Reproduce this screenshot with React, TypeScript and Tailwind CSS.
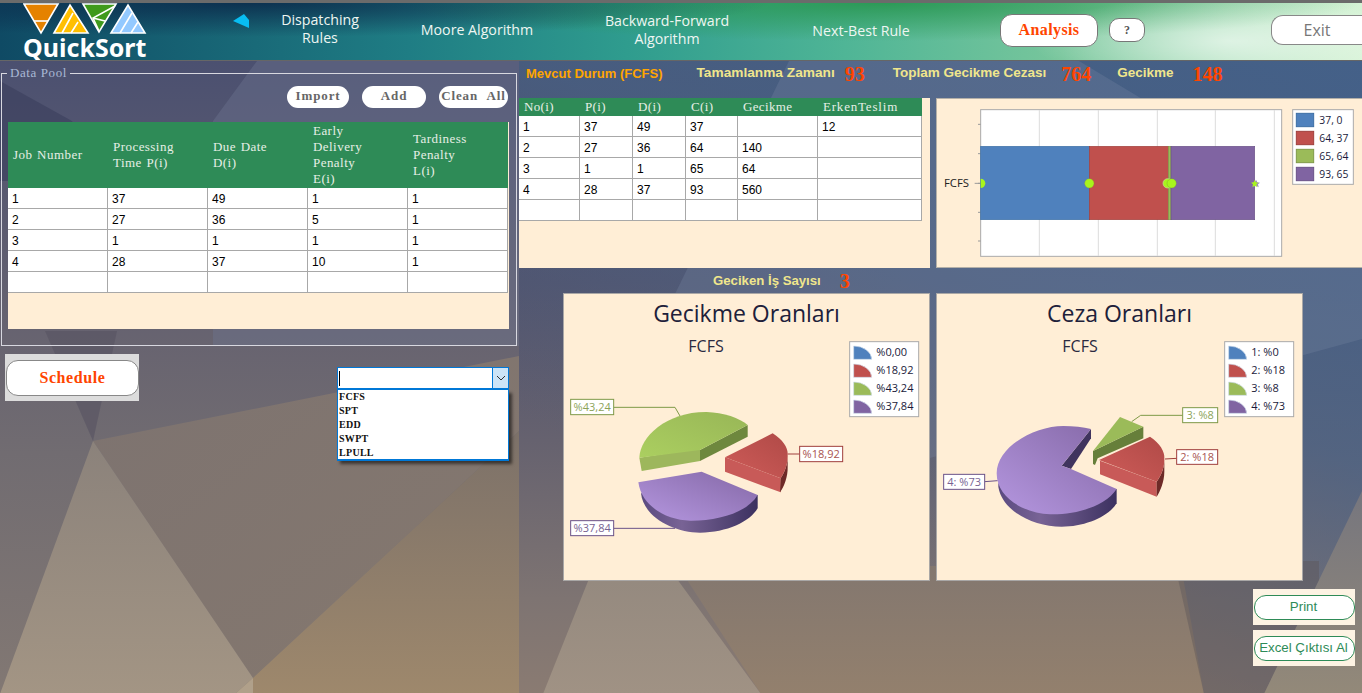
import React from "react";

const sans = "font-['Liberation_Sans',Arial,sans-serif]";

function LeftBackground() {
  return (
    <svg className="absolute inset-0 -z-10" width="519" height="633" viewBox="0 0 519 633">
      <defs>
        <linearGradient id="lbase" x1="0" y1="0" x2="0" y2="1">
          <stop offset="0" stopColor="#4b5070" />
          <stop offset="0.45" stopColor="#686470" />
          <stop offset="0.62" stopColor="#716c71" />
          <stop offset="1" stopColor="#827873" />
        </linearGradient>
        <linearGradient id="llight" x1="0" y1="0" x2="0" y2="1">
          <stop offset="0" stopColor="#8b827b" />
          <stop offset="1" stopColor="#a39584" />
        </linearGradient>
        <linearGradient id="lmid" x1="0" y1="0" x2="1" y2="1">
          <stop offset="0" stopColor="#7d7370" />
          <stop offset="1" stopColor="#85786e" />
        </linearGradient>
        <linearGradient id="lwarm" x1="0" y1="0" x2="0" y2="1">
          <stop offset="0" stopColor="#7c7169" />
          <stop offset="1" stopColor="#9e886c" />
        </linearGradient>
      </defs>
      <rect width="519" height="633" fill="url(#lbase)" />
      <polygon points="0,20 72,60 110,120 0,120" fill="#3d4160" opacity="0.7" />
      <polygon points="213,60 257,0 519,0 519,285 213,285" fill="#6d7692" opacity="0.4" />
      <polygon points="45,270 117,270 93,380" fill="#5a5664" opacity="0.7" />
      <polygon points="93,380 519,295 519,370 253,617" fill="url(#lmid)" />
      <polygon points="253,617 519,370 519,633 235,633" fill="url(#lwarm)" />
      <polygon points="93,380 0,633 235,633 253,617" fill="url(#llight)" />
      <polygon points="235,633 253,617 253,633" fill="#b0a08a" />
    </svg>
  );
}

function RightBackground() {
  return (
    <svg className="absolute inset-0 -z-10" width="843" height="633" viewBox="0 0 843 633">
      <defs>
        <linearGradient id="rbase" x1="0" y1="0" x2="0" y2="1">
          <stop offset="0" stopColor="#434a68" />
          <stop offset="0.35" stopColor="#4f526c" />
          <stop offset="0.6" stopColor="#66626f" />
          <stop offset="0.85" stopColor="#7e7472" />
          <stop offset="1" stopColor="#8a7b72" />
        </linearGradient>
        <linearGradient id="rblue" x1="1" y1="0" x2="0.35" y2="1">
          <stop offset="0" stopColor="#44638c" stopOpacity="0.9" />
          <stop offset="0.45" stopColor="#4a6488" stopOpacity="0.7" />
          <stop offset="0.85" stopColor="#5a6480" stopOpacity="0" />
        </linearGradient>
        <linearGradient id="rlight" x1="0" y1="0" x2="0" y2="1">
          <stop offset="0" stopColor="#8d847c" />
          <stop offset="1" stopColor="#a09284" />
        </linearGradient>
        <linearGradient id="rwarm" x1="0" y1="0" x2="0" y2="1">
          <stop offset="0" stopColor="#83776f" />
          <stop offset="1" stopColor="#93806d" />
        </linearGradient>
        <linearGradient id="rgray" x1="0" y1="0" x2="0" y2="1">
          <stop offset="0" stopColor="#76767e" />
          <stop offset="1" stopColor="#938979" />
        </linearGradient>
      </defs>
      <rect width="843" height="633" fill="url(#rbase)" />
      <rect width="843" height="633" fill="url(#rblue)" />
      <polygon points="155,235 270,0 560,0 843,170 843,278 400,400" fill="#7a88a6" opacity="0.28" />
      <polygon points="159,505 242,633 685,633 662,505" fill="url(#rwarm)" />
      <polygon points="101,440 24,633 242,633" fill="url(#rlight)" />
      <polygon points="655,500 685,633 745,633 800,520 800,500" fill="#5e5658" opacity="0.45" />
      <polygon points="745,633 843,430 843,633" fill="url(#rgray)" />
    </svg>
  );
}

function Logo() {
  const s = { stroke: "#fff", strokeWidth: 1.6 };
  return (
    <svg width="126" height="32" viewBox="0 0 126 32" className="block">
      <polygon points="1,1 35,1 18,30" fill="#e58200" {...s} />
      <line x1="11" y1="18" x2="25" y2="18" {...s} />
      <polygon points="31,30 47,2 65,30" fill="#ffbf00" {...s} />
      <path d="M39 30 L50 10 M48 30 L55 19" {...s} fill="none" />
      <polygon points="60,1 93,1 76,29" fill="#3f9a1c" {...s} />
      <path d="M92 3 L70 15 L76 28 M70 15 L82 18" {...s} fill="none" />
      <polygon points="88,30 105,2 122,30" fill="#93c9ff" {...s} />
      <path d="M97 30 L109 10 M108 30 L115 19" {...s} fill="none" />
    </svg>
  );
}

function NavItem({ w, children }: { w: string; children: React.ReactNode }) {
  return <div className={`${w} text-center text-[14.2px] leading-[18px] text-[#eef6f2] font-['Open_Sans',sans-serif]`}>{children}</div>;
}

function Header() {
  return (
    <header className="flex items-center h-[61px] shrink-0 border-t-[3px] border-b border-t-[#6b6b6b] border-b-[#666] bg-[radial-gradient(ellipse_200px_45px_at_1230px_38px,rgba(255,255,255,0.55),rgba(255,255,255,0)),radial-gradient(ellipse_520px_34px_at_250px_0px,rgba(10,35,70,0.8),rgba(10,35,70,0)),radial-gradient(ellipse_480px_38px_at_880px_0px,rgba(40,150,80,0.9),rgba(40,150,80,0)),linear-gradient(to_right,#0f4a64_0%,#1f7d84_30%,#2f9c8e_46%,#4fb596_62%,#78c69c_78%,#b4e3c2_90%,#d6f3d6_100%)]">
      <div className="w-[233px] pl-[23px] h-full overflow-hidden">
        <Logo />
        <div className="text-white font-bold text-[25px] leading-[27px] font-['Noto_Sans',sans-serif] -mt-[1px]">QuickSort</div>
      </div>
      <svg width="17" height="15" viewBox="0 0 17 15" className="-mt-[20px]">
        <polygon points="0,7 11,0 16,6 16,14" fill="#08bdf2" />
      </svg>
      <NavItem w="w-[140px] pb-[5px]">
        Dispatching
        <br />
        Rules
      </NavItem>
      <NavItem w="w-[174px] pb-[3px]">Moore Algorithm</NavItem>
      <NavItem w="w-[206px] pb-[3px]">
        Backward-Forward
        <br />
        Algorithm
      </NavItem>
      <NavItem w="w-[182px] pb-[1px]">Next-Best Rule</NavItem>
      <button className="ml-[48px] w-[98px] h-[33px] -mt-[3px] bg-white rounded-[12px] border border-[#777] text-[#ff4500] font-bold text-[16px] tracking-[0.4px] font-['Liberation_Serif',serif]">Analysis</button>
      <button className="ml-[11px] w-[36px] h-[24px] -mt-[3px] bg-white rounded-[10px] border border-[#777] text-[#555] font-bold text-[12px] font-['Liberation_Serif',serif]">?</button>
      <button className="ml-[126px] w-[91px] h-[30px] -mt-[3px] bg-white rounded-l-[12px] border border-r-0 border-[#888] text-[#777] text-[16px] font-['Open_Sans',sans-serif]">Exit</button>
    </header>
  );
}

const jobRows = [
  ["1", "37", "49", "1", "1"],
  ["2", "27", "36", "5", "1"],
  ["3", "1", "1", "1", "1"],
  ["4", "28", "37", "10", "1"],
  ["", "", "", "", ""],
];

function SmallButton({ w, children }: { w: string; children: React.ReactNode }) {
  return (
    <button className={`${w} h-[22px] pb-[4px] bg-white rounded-[11px] text-[#666] font-bold text-[13px] tracking-[0.9px] [word-spacing:5px] leading-none whitespace-nowrap font-['Liberation_Serif',serif]`}>{children}</button>
  );
}

function LeftColumn() {
  return (
    <section className="relative w-[519px] shrink-0 h-full">
      <LeftBackground />
      <fieldset className="mt-[4px] ml-[1px] w-[516px] h-[281px] border border-[#d8d8e0] pl-[6px] pr-[7px]">
        <legend className="-ml-[1px] px-[3px] text-[13px] leading-[16px] tracking-[0.6px] text-[#a9b8d4] font-['Liberation_Serif',serif]">Data Pool</legend>
        <div className="flex justify-end gap-[13px] pt-[5px] pr-[1px]">
          <SmallButton w="w-[62px]">Import</SmallButton>
          <SmallButton w="w-[64px]">Add</SmallButton>
          <SmallButton w="w-[69px]">Clean All</SmallButton>
        </div>
        <div className="mt-[14px] h-[207px] bg-[#ffeed6]">
          <table className="table-fixed w-[500px] border-separate border-spacing-0">
            <thead>
              <tr className="h-[66px] bg-[#2e8b57] text-left text-[#e6efe6] text-[13px] leading-[16px] tracking-[0.45px] [word-spacing:1px] font-['Liberation_Serif',serif]">
                <th className="font-normal pl-[5px] w-[100px]">Job Number</th>
                <th className="font-normal pl-[5px] w-[100px]">Processing<br />Time P(i)</th>
                <th className="font-normal pl-[5px] w-[100px]">Due Date<br />D(i)</th>
                <th className="font-normal pl-[5px] w-[100px]">Early<br />Delivery<br />Penalty<br />E(i)</th>
                <th className="font-normal pl-[5px] w-[100px]">Tardiness<br />Penalty<br />L(i)</th>
              </tr>
            </thead>
            <tbody>
              {jobRows.map((r, i) => (
                <tr key={i} className="h-[21px] bg-white">
                  {r.map((c, j) => (
                    <td key={j} className={`border-r border-b border-[#a8a8a8] pl-[4px] pt-[2px] pb-0 text-[12px] leading-[14px] text-black ${sans}`}>{c}</td>
                  ))}
                </tr>
              ))}
            </tbody>
          </table>
        </div>
      </fieldset>
      <div className="flex items-start mt-[8px] ml-[5px]">
        <div className="w-[134px] h-[47px] bg-[#dcdcdc] pt-[6px] pl-[1px]">
          <button className="w-[133px] h-[36px] bg-white rounded-[12px] border border-[#888] text-[#ff4500] font-bold text-[16px] tracking-[0.6px] font-['Liberation_Serif',serif]">Schedule</button>
        </div>
        <div className="relative ml-[198px] mt-[13px] w-[172px]">
          <div className="flex h-[23px] bg-white border border-b-2 border-[#0078d7]">
            <div className="flex-1 flex items-center pl-[1px]">
              <span className="w-[1px] h-[15px] bg-black" />
            </div>
            <div className="w-[16px] flex items-center justify-center bg-[#cce4f7] border-l border-[#0078d7]">
              <svg width="10" height="6" viewBox="0 0 10 6">
                <path d="M1 1 L5 5 L9 1" fill="none" stroke="#333" strokeWidth="1" />
              </svg>
            </div>
          </div>
          <ul className="absolute left-0 top-[23px] w-[172px] h-[71px] bg-white border border-t-0 border-[#0078d7] border-b-2 pl-[1px] shadow-[3px_3px_3px_rgba(0,0,0,0.55)] text-[10px] leading-[14px] font-bold tracking-[0.3px] text-[#111] font-['Liberation_Serif',serif]">
            <li>FCFS</li>
            <li>SPT</li>
            <li>EDD</li>
            <li>SWPT</li>
            <li>LPULL</li>
          </ul>
        </div>
      </div>
    </section>
  );
}

const resultRows = [
  ["1", "37", "49", "37", "", "12"],
  ["2", "27", "36", "64", "140", ""],
  ["3", "1", "1", "65", "64", ""],
  ["4", "28", "37", "93", "560", ""],
  ["", "", "", "", "", ""],
];

function ResultTable() {
  const heads = [
    ["No(i)", "w-[61px]"],
    ["P(i)", "w-[53px]"],
    ["D(i)", "w-[53px]"],
    ["C(i)", "w-[52px]"],
    ["Gecikme", "w-[80px]"],
    ["ErkenTeslim", "w-[104px] tracking-[0.8px]"],
  ];
  return (
    <div className="w-[411px] h-[170px] bg-[#ffeed6]">
      <table className="table-fixed w-[403px] border-separate border-spacing-0">
        <thead>
          <tr className="h-[18px] bg-[#2e8b57] text-left text-[#e6efe6] text-[13px] leading-[16px] tracking-[0.35px] font-['Liberation_Serif',serif]">
            {heads.map(([h, w]) => (
              <th key={h} className={`${w} font-normal pl-[5px]`}>{h}</th>
            ))}
          </tr>
        </thead>
        <tbody>
          {resultRows.map((r, i) => (
            <tr key={i} className="h-[21px] bg-white">
              {r.map((c, j) => (
                <td key={j} className={`border-r border-b border-[#a8a8a8] pl-[4px] pt-[2px] pb-0 text-[12px] leading-[14px] text-black ${sans}`}>{c}</td>
              ))}
            </tr>
          ))}
        </tbody>
      </table>
    </div>
  );
}

const chartFont = "'Open Sans', sans-serif";

function GanttChart() {
  const grid = [328, 505, 682, 856, 1033];
  const ticks = [88, 176, 265, 352, 438];
  const legend = [
    ["#4f81bd", "#3d6fa5", "37, 0"],
    ["#c0504d", "#a03f3c", "64, 37"],
    ["#9bbb59", "#7f9a48", "65, 64"],
    ["#8064a2", "#6a5288", "93, 65"],
  ];
  return (
    <div className="w-[426px] h-[170px] bg-[#ffeed6] border border-r-0 border-[#b4b0a8]">
      <svg width="425" height="168" viewBox="21 12 1275 504" className="block">
        <rect x="152" y="44" width="903" height="440" fill="#fff" stroke="#aaa" strokeWidth="3" />
        {grid.map((x) => (
          <line key={x} x1={x} y1="45" x2={x} y2="483" stroke="#dcdcdc" strokeWidth="3" />
        ))}
        {ticks.map((y) => (
          <line key={y} x1="144" y1={y} x2="152" y2={y} stroke="#999" strokeWidth="3" />
        ))}
        <line x1="134" y1="265" x2="152" y2="265" stroke="#999" strokeWidth="3" />
        <rect x="152" y="154" width="326" height="220" fill="#4f81bd" stroke="#3d6fa5" strokeWidth="2" />
        <rect x="478" y="154" width="237" height="220" fill="#c0504d" stroke="#a03f3c" strokeWidth="2" />
        <rect x="715" y="154" width="8" height="220" fill="#9bbb59" stroke="#7f9a48" strokeWidth="2" />
        <rect x="723" y="154" width="251" height="220" fill="#8064a2" stroke="#6a5288" strokeWidth="2" />
        <path d="M152 251 A14 14 0 0 1 152 279 Z" fill="#a8f51c" />
        <circle cx="478" cy="265" r="14" fill="#a8f51c" stroke="#8a8f30" strokeWidth="1" />
        <circle cx="713" cy="265" r="14" fill="#a8f51c" stroke="#c9d9a0" strokeWidth="2" />
        <circle cx="725" cy="265" r="14" fill="#a8f51c" stroke="#6d8a40" strokeWidth="1" />
        <polygon points="978,254 982,262 990,263 984,268 986,277 978,272 970,277 972,268 966,263 974,262" fill="#9d8fb8" />
        <polygon points="974,255 977,262 985,263 979,268 981,276 974,272 967,276 969,268 963,263 971,262" fill="#a8f51c" />
        <text x="42" y="276" fontSize="34" fill="#222" fontFamily={chartFont}>FCFS</text>
        <rect x="1088" y="44" width="182" height="224" fill="#fff" stroke="#aaa" strokeWidth="3" />
        {legend.map(([f, s, t], i) => (
          <g key={t}>
            <rect x="1099" y={55 + i * 54} width="52" height="40" fill={f} stroke={s} strokeWidth="3" />
            <text x="1168" y={86 + i * 54} fontSize="31" fill="#1a1a3a" fontFamily={chartFont}>{t}</text>
          </g>
        ))}
      </svg>
    </div>
  );
}

function Legend({ items }: { items: string[] }) {
  const fills = ["#4f81bd", "#c0504d", "#9bbb59", "#8064a2"];
  return (
    <g>
      <rect x="869" y="155" width="207" height="225" fill="#fff" stroke="#aaa" strokeWidth="3" />
      {items.map((t, i) => (
        <g key={t}>
          <path d={`M881 ${208 + i * 54} L881 ${168 + i * 54} A54 40 0 0 1 935 ${208 + i * 54} Z`} fill={fills[i]} stroke="#cfdcec" strokeWidth="2" />
          <text x="949" y={198 + i * 54} fontSize="33" fill="#1a1a3a" fontFamily={chartFont}>{t}</text>
        </g>
      ))}
    </g>
  );
}

function Callout({ x, y, w, h, color, text, line }: { x: number; y: number; w: number; h: number; color: string; text: string; line: string }) {
  return (
    <g>
      <polyline points={line} fill="none" stroke={color} strokeWidth="3" />
      <rect x={x} y={y} width={w} height={h} fill="#fff" stroke={color} strokeWidth="3" />
      <text x={x + w / 2} y={y + h / 2 + 11} fontSize="33" textAnchor="middle" fill={color} opacity="0.9" fontFamily={chartFont}>{text}</text>
    </g>
  );
}

function Gradients({ id }: { id: string }) {
  return (
    <defs>
      <linearGradient id={`${id}p`} x1="0" y1="1" x2="1" y2="0">
        <stop offset="0" stopColor="#b597e0" />
        <stop offset="1" stopColor="#8468a6" />
      </linearGradient>
      <linearGradient id={`${id}ps`} x1="0" y1="0" x2="1" y2="0">
        <stop offset="0" stopColor="#5a4a80" />
        <stop offset="0.35" stopColor="#786395" />
        <stop offset="1" stopColor="#3c3160" />
      </linearGradient>
      <linearGradient id={`${id}g`} x1="0" y1="1" x2="1" y2="0">
        <stop offset="0" stopColor="#abcf60" />
        <stop offset="1" stopColor="#98b657" />
      </linearGradient>
      <linearGradient id={`${id}r`} x1="0" y1="1" x2="1" y2="0">
        <stop offset="0" stopColor="#cf5c59" />
        <stop offset="1" stopColor="#b04a47" />
      </linearGradient>
    </defs>
  );
}

function DelayPie() {
  return (
    <svg width="365" height="286" viewBox="12 12 1095 858" className="absolute left-0 top-0">
      <Gradients id="a" />
      <text x="438" y="186" fontSize="48" textAnchor="middle" fill="#2a2a40" fontFamily={chartFont}>FCFS</text>
      <Callout x={32} y={328} w={129} h={46} color="#7f9a48" text="%43,24" line="161,352 345,352 360,378" />
      <Callout x={719} y={469} w={129} h={46} color="#a03f3c" text="%18,92" line="683,492 719,492" />
      <Callout x={32} y={692} w={129} h={45} color="#6a5288" text="%37,84" line="161,715 345,715" />
      <path d="M238 503 L420 475 L420 513 L245 543 Z" fill="#9db75c" />
      <path d="M420 480 L563 405 L563 440 L420 513 Z" fill="#6e883e" />
      <path d="M420 480 L238 503 C240 440 320 365 440 366 C490 367 540 385 563 405 Z" fill="url(#ag)" />
      <path d="M495 502 L662 565 L662 607 L495 545 Z" fill="#c85a58" />
      <path d="M662 565 C675 545 684 520 683 495 L683 530 C684 560 672 590 660 607 Z" fill="#6e2a28" />
      <path d="M495 502 L638 430 C670 450 685 475 683 495 C684 520 675 545 662 565 Z" fill="url(#ar)" />
      <path d="M243 610 C250 680 340 728 420 728 C500 728 570 695 593 655 L593 615 L243 610 Z" fill="url(#aps)" />
      <path d="M425 545 L593 615 C560 670 470 693 390 692 C320 690 245 650 235 577 Z" fill="url(#ap)" />
      <Legend items={["%0,00", "%18,92", "%43,24", "%37,84"]} />
    </svg>
  );
}

function PenaltyPie() {
  return (
    <svg width="365" height="286" viewBox="6 12 1095 858" className="absolute left-0 top-0">
      <Gradients id="b" />
      <text x="435" y="186" fontSize="48" textAnchor="middle" fill="#2a2a40" fontFamily={chartFont}>FCFS</text>
      <Callout x={743} y={353} w={105} h={45} color="#7f9a48" text="3: %8" line="590,395 617,376 743,376" />
      <Callout x={725} y={479} w={123} h={44} color="#a03f3c" text="2: %18" line="690,507 725,505" />
      <Callout x={26} y={553} w={123} h={45} color="#6a5288" text="4: %73" line="149,575 188,572" />
      <path d="M474 483 L625 410 L625 445 L488 505 L480 525 L474 522 Z" fill="#667f3a" />
      <path d="M474 483 L555 381 L625 410 Z" fill="#9bbb59" />
      <path d="M495 512 L665 575 L665 620 L495 553 Z" fill="#c85a58" />
      <path d="M665 575 C680 555 689 530 688 505 L688 545 C688 575 675 605 665 620 Z" fill="#6e2a28" />
      <path d="M492 510 L645 440 C675 460 690 485 688 505 C689 530 680 555 665 575 Z" fill="url(#br)" />
      <path d="M190 590 C200 660 290 710 380 710 C450 710 520 680 545 640 L545 597 L190 580 Z" fill="url(#bps)" />
      <path d="M468 417 L468 445 L408 537 L380 527 Z" fill="#40345e" />
      <path d="M380 527 L408 537 L545 597 C510 650 420 675 345 673 C270 670 185 625 185 550 C185 470 300 408 385 408 C415 408 445 411 468 417 Z" fill="url(#bp)" />
      <Legend items={["1: %0", "2: %18", "3: %8", "4: %73"]} />
    </svg>
  );
}

function ChartPanel({ title, children }: { title: string; children: React.ReactNode }) {
  return (
    <div className="relative w-[367px] h-[288px] bg-[#ffeed6] border border-[#a9a7a6]">
      <h2 className="relative z-10 text-center text-[23px] leading-[36px] pt-[1px] text-[#20203a] font-['Open_Sans',sans-serif]">{title}</h2>
      {children}
    </div>
  );
}

function Stat({ className, children }: { className?: string; children: React.ReactNode }) {
  return <span className={`text-[#f0e68c] font-bold ${sans} ${className ?? ""}`}>{children}</span>;
}

function Num({ className, children }: { className?: string; children: React.ReactNode }) {
  return <span className={`text-[#ff4500] font-bold text-[20px] leading-none font-['Liberation_Serif',serif] ${className ?? ""}`}>{children}</span>;
}

function RightColumn() {
  return (
    <section className="relative flex-1 h-full">
      <RightBackground />
      <div className="flex items-center h-[37px] pl-[7px] pb-[12px]">
        <span className={`text-[#ffa500] font-bold text-[13px] ${sans}`}>Mevcut Durum (FCFS)</span>
        <Stat className="ml-[34px] text-[13.7px]">Tamamlanma Zamanı</Stat>
        <Num className="ml-[10px]">93</Num>
        <Stat className="ml-[28px] text-[13.5px]">Toplam Gecikme Cezası</Stat>
        <Num className="ml-[15px]">764</Num>
        <Stat className="ml-[26px] text-[13.5px]">Gecikme</Stat>
        <Num className="ml-[19px]">148</Num>
      </div>
      <div className="flex gap-[6px]">
        <ResultTable />
        <GanttChart />
      </div>
      <div className="flex items-center h-[25px] pl-[194px]">
        <Stat className="text-[13.2px]">Geciken İş Sayısı</Stat>
        <Num className="ml-[19px]">3</Num>
      </div>
      <div className="flex gap-[6px] ml-[44px]">
        <ChartPanel title="Gecikme Oranları">
          <DelayPie />
        </ChartPanel>
        <ChartPanel title="Ceza Oranları">
          <PenaltyPie />
        </ChartPanel>
      </div>
      <div className="flex flex-col items-end gap-[5px] mt-[8px] mr-[7px]">
        {["Print", "Excel Çıktısı Al"].map((t) => (
          <div key={t} className="w-[102px] h-[36px] bg-[#fdf3e3] flex items-center pl-[1px]">
            <button className={`w-[101px] h-[25px] pr-[2px] bg-white rounded-[12px] border border-[#2e8b57] text-[#2e8b57] text-[13.3px] whitespace-nowrap ${sans}`}>{t}</button>
          </div>
        ))}
      </div>
    </section>
  );
}

export default function App() {
  return (
    <div className="relative z-0 flex flex-col w-[1362px] h-[693px] overflow-hidden">
      <Header />
      <main className="relative z-0 flex flex-1 min-h-0">
        <LeftColumn />
        <RightColumn />
      </main>
    </div>
  );
}
